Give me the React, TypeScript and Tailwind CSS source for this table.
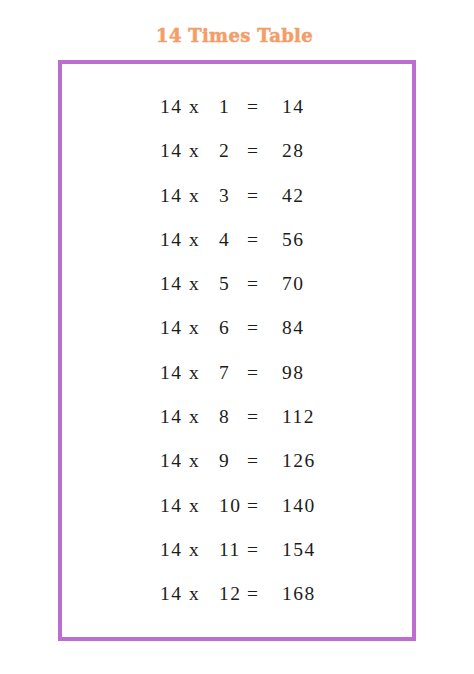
import React from "react";

const rows = Array.from({ length: 12 }, (_, i) => i + 1);

const App = () => {
  return (
    <div className="w-[474px] h-[674px] bg-white">
      <div
        className="h-[60px] pt-[26px] text-center text-[18px] leading-[20px] font-bold text-[#f49d68] pr-[5px] tracking-[0.3px] [-webkit-text-stroke:0.5px_#f49d68]"
        style={{ fontFamily: '"DejaVu Serif", serif' }}
      >
        14 Times Table
      </div>
      <div className="ml-[58px] w-[358px] h-[581px] border-4 border-[#bb6dd0] pt-[21px]">
        <div
          className="pl-[98px] text-[19.5px] leading-[44.3px] tracking-[1.5px] text-[#1c1c1c]"
          style={{ fontFamily: '"Liberation Serif", serif' }}
        >
          {rows.map((n) => (
            <div key={n} className="flex">
              <span className="w-[29px]">14</span>
              <span className="w-[30px]">x</span>
              <span className="w-[28px]">{n}</span>
              <span className="w-[35px]">=</span>
              <span>{14 * n}</span>
            </div>
          ))}
        </div>
      </div>
    </div>
  );
};

export default App;
